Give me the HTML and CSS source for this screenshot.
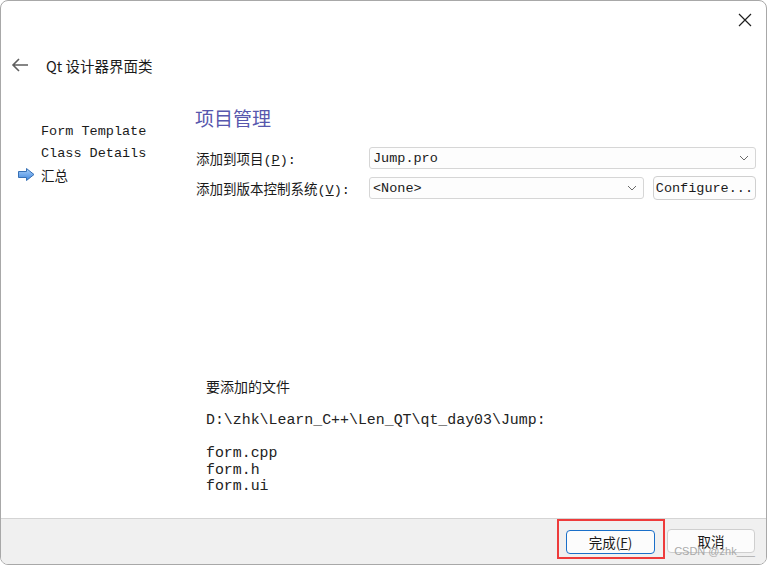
FILE: index.html
```html
<!DOCTYPE html>
<html>
<head>
  <title>Qt 设计器界面类</title>
  <link rel="stylesheet" href="styles.css">
</head>
<body>
  <div class="window">
    <div class="titlebar">
      <svg class="close-icon" width="14" height="14" viewBox="0 0 14 14">
        <path d="M1 1 L13 13 M13 1 L1 13" stroke="#1f1f1f" stroke-width="1.2" fill="none"/>
      </svg>
    </div>

    <div class="header">
      <svg class="back-icon" width="18" height="14" viewBox="0 0 18 14">
        <path d="M17 7 H2 M8 1 L2 7 L8 13" stroke="#5f5f5f" stroke-width="1.6" fill="none"/>
      </svg>
      <span class="header-title">Qt 设计器界面类</span>
    </div>

    <div class="main">
      <!-- Wizard steps -->
      <ul class="steps">
        <li class="step"><span class="step-marker"></span>Form Template</li>
        <li class="step"><span class="step-marker"></span>Class Details</li>
        <li class="step current">
          <span class="step-marker">
            <svg width="17" height="13" viewBox="0 0 17 13">
              <defs>
                <linearGradient id="arrowFill" x1="0" y1="0" x2="0" y2="1">
                  <stop offset="0" stop-color="#a9d0fb"/>
                  <stop offset="1" stop-color="#3f86dc"/>
                </linearGradient>
              </defs>
              <path d="M0.5 3.5 H8.5 V0.5 L16 6.5 L8.5 12.5 V9.5 H0.5 Z" fill="url(#arrowFill)" stroke="#3770b5" stroke-width="1"/>
            </svg>
          </span>汇总
        </li>
      </ul>

      <div class="content">
        <h1 class="page-title">项目管理</h1>

        <div class="form-grid">
          <label class="field-label">添加到项目(<u>P</u>):</label>
          <div class="combo wide">
            <span>Jump.pro</span>
            <svg class="chevron" width="10" height="6" viewBox="0 0 10 6"><path d="M1 1 L5 5 L9 1" stroke="#6a6a6a" fill="none"/></svg>
          </div>

          <label class="field-label">添加到版本控制系统(<u>V</u>):</label>
          <div class="field-row">
            <div class="combo">
              <span>&lt;None&gt;</span>
              <svg class="chevron" width="10" height="6" viewBox="0 0 10 6"><path d="M1 1 L5 5 L9 1" stroke="#6a6a6a" fill="none"/></svg>
            </div>
            <button class="small-button">Configure...</button>
          </div>
        </div>

        <div class="files">
          <p class="files-title">要添加的文件</p>
          <pre class="files-list">D:\zhk\Learn_C++\Len_QT\qt_day03\Jump:

form.cpp
form.h
form.ui</pre>
        </div>
      </div>
    </div>

    <div class="footer">
      <div class="highlight">
        <button class="dialog-button primary">完成(<u>F</u>)</button>
      </div>
      <button class="dialog-button">取消</button>
      <span class="watermark">CSDN @zhk___</span>
    </div>
  </div>
</body>
</html>
```

FILE: styles.css
```css
* {
  box-sizing: border-box;
}

body {
  margin: 0;
  background: #ffffff;
  font-family: "Noto Sans CJK SC", sans-serif;
  color: #1a1a1a;
}

.window {
  width: 767px;
  height: 565px;
  display: flex;
  flex-direction: column;
  border: 1px solid #a8a8a8;
  border-radius: 8px;
  overflow: hidden;
  background: #ffffff;
}

.titlebar {
  height: 45px;
  display: flex;
  justify-content: flex-end;
  padding: 12px 14px 0 0;
}

.header {
  height: 38px;
  display: flex;
  align-items: center;
  padding-left: 10px;
}

.back-icon {
  margin-right: 17px;
}

.header-title {
  font-size: 14.5px;
  color: #1a1a1a;
}

.main {
  flex: 1;
  display: flex;
}

/* Step list on the left */
.steps {
  list-style: none;
  margin: 0;
  padding: 37px 0 0 17px;
  width: 194px;
  font-family: "Liberation Mono", "Noto Sans CJK SC", monospace;
  font-size: 13.5px;
}

.step {
  height: 21.5px;
  display: flex;
  align-items: center;
}

.step-marker {
  width: 23px;
  display: flex;
  align-items: center;
}

.content {
  flex: 1;
  display: flex;
  flex-direction: column;
  padding-right: 10px;
}

.page-title {
  margin: 22px 0 0 0;
  font-size: 19px;
  font-weight: 400;
  line-height: 24px;
  color: #5757ad;
}

.form-grid {
  display: grid;
  grid-template-columns: 173px 1fr;
  row-gap: 7px;
  align-items: center;
  margin-top: 17px;
  padding-left: 1px;
}

.field-label {
  font-family: "Liberation Mono", "Noto Sans CJK SC", monospace;
  font-size: 13.5px;
}

.field-row {
  display: flex;
  align-items: center;
  gap: 9px;
}

.combo {
  flex: 1;
  height: 22px;
  display: flex;
  align-items: center;
  justify-content: space-between;
  padding: 0 6px 0 3px;
  border: 1px solid #d6d6d6;
  border-radius: 3px;
  background: #fdfdfd;
  font-family: "Liberation Mono", monospace;
  font-size: 13.5px;
}

.combo.wide {
  width: 100%;
}

.small-button {
  height: 24px;
  padding: 0 2px;
  border: 1px solid #d0d0d0;
  border-radius: 4px;
  background: #fdfdfd;
  font-family: "Liberation Mono", monospace;
  font-size: 13.5px;
  color: #1a1a1a;
}

.files {
  margin-top: 176px;
  padding-left: 11px;
}

.files-title {
  margin: 0;
  font-size: 14px;
  line-height: 20px;
}

.files-list {
  margin: 16px 0 0 0;
  font-family: "Liberation Mono", monospace;
  font-size: 14.9px;
  line-height: 16.6px;
  color: #222;
}

.footer {
  position: relative;
  height: 46px;
  display: flex;
  align-items: flex-start;
  justify-content: flex-end;
  padding: 0 11px 0 0;
  background: #f0f0f0;
  border-top: 1px solid #d4d4d4;
}

/* red annotation box around the finish button */
.highlight {
  border: 2px solid #ee3b3b;
  padding: 8px 8px 3px 7px;
  margin-right: 2px;
}

.dialog-button {
  width: 88px;
  height: 24px;
  border: 1px solid #cfcfcf;
  border-radius: 4px;
  background: #fcfcfc;
  font-family: "Noto Sans CJK SC", sans-serif;
  font-size: 13.5px;
  color: #1a1a1a;
  margin-top: 10px;
  padding: 0;
}

.highlight .dialog-button {
  margin-top: 0;
  width: 89px;
}

.dialog-button.primary {
  border-color: #1a6fc9;
}

.watermark {
  position: absolute;
  right: 11px;
  bottom: 7px;
  font-family: "Liberation Sans", sans-serif;
  font-size: 11px;
  color: #a9a9a9;
}
```
